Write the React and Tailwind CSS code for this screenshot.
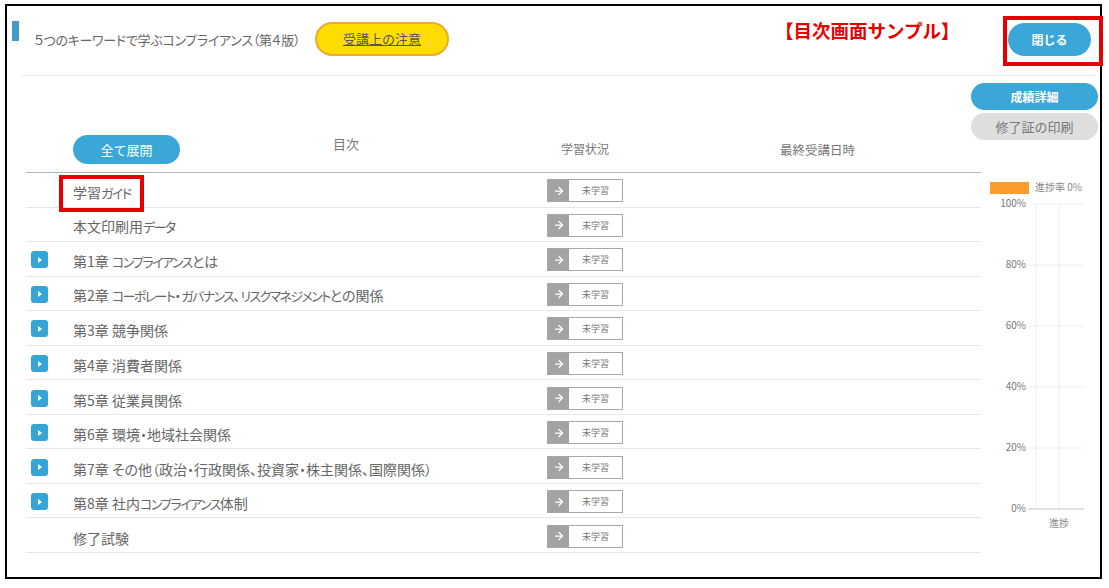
import { ArrowRight } from 'lucide-react';

const ROWS = [
    { title: '学習ガイド', expand: false },
    { title: '本文印刷用データ', expand: false },
    { title: '第1章 コンプライアンスとは', expand: true },
    { title: '第2章 コーポレート・ガバナンス、リスクマネジメントとの関係', expand: true },
    { title: '第3章 競争関係', expand: true },
    { title: '第4章 消費者関係', expand: true },
    { title: '第5章 従業員関係', expand: true },
    { title: '第6章 環境・地域社会関係', expand: true },
    { title: '第7章 その他（政治・行政関係、投資家・株主関係、国際関係）', expand: true },
    { title: '第8章 社内コンプライアンス体制', expand: true },
    { title: '修了試験', expand: false },
];

const TICKS = [
    { label: '100%', y: 204 },
    { label: '80%', y: 265 },
    { label: '60%', y: 326 },
    { label: '40%', y: 387 },
    { label: '20%', y: 448 },
    { label: '0%', y: 509 },
];

// katakana runs sit much tighter than kanji in the original font
const Title = ({ text }) => text.split(/([ァ-ヶー]+)/).map((part, i) => (
    i % 2 === 1
        ? <span key={i} className="text-[13px] tracking-[-1.6px]">{part}</span>
        : <span key={i}>{part}</span>
));

const Row = ({ title, expand }) => (
    <div className="flex items-center h-[34.55px] pt-[2px] border-b border-[#e6e6e6]">
        <div className="w-[47px] flex justify-start pl-[5px]">
            {expand && (
                <div className="w-[17px] h-[17px] rounded-[3px] bg-[#35a5d6] flex items-center justify-center">
                    <div className="w-0 h-0 border-y-[3px] border-y-transparent border-l-[4px] border-l-white" />
                </div>
            )}
        </div>
        <div className="w-[474px] pt-[3px] text-sm leading-5 [font-feature-settings:'palt'] text-[#666666] truncate">
            <Title text={title} />
        </div>
        <div className="w-[76px] h-[23px] flex border border-[#a8a8a8] bg-white">
            <div className="w-[21px] bg-[#a3a3a3] flex items-center justify-center">
                <ArrowRight className="w-3 h-3 text-white" strokeWidth={2.5} />
            </div>
            <div className="flex-1 text-center text-[9px] leading-[21px] text-[#777777]">未学習</div>
        </div>
    </div>
);

// x / y below are page coordinates, the svg starts at 971,175
const ProgressChart = () => (
    <svg width="127" height="360" viewBox="971 175 127 360" className="block">
        <rect x="990" y="182" width="39" height="12" fill="#fb9c2c" />
        <text x="1035" y="191" fontSize="10" fill="#8a8a8a">進捗率 0%</text>
        <line x1="1036" y1="204" x2="1036" y2="509" stroke="#eeeeee" />
        <line x1="1059" y1="204" x2="1059" y2="509" stroke="#eeeeee" />
        {TICKS.map((t) => (
            <g key={t.label}>
                <line x1="1028" y1={t.y} x2="1084" y2={t.y} stroke={t.label === '0%' ? '#c4c4c4' : '#eeeeee'} />
                <text x="1026" y={t.y + 3} fontSize="10" textAnchor="end" fill="#777777">{t.label}</text>
            </g>
        ))}
        <text x="1059" y="527" fontSize="10" textAnchor="middle" fill="#8a8a8a">進捗</text>
    </svg>
);

const App = () => {
    return (
        <div className="w-[1109px] h-[588px] bg-white pt-1 pl-[5px] font-['Noto_Sans_CJK_JP','Noto_Sans',sans-serif]">
            <div className="relative w-[1097px] h-[575px] border-2 border-black">
                <div className="flex h-[69px] pl-[5px]">
                    <div className="w-[7px] h-5 mt-[15px] bg-[#3f9cc4]" />
                    <div className="w-[281px] ml-[15px] mt-[24px] text-[13px] leading-5 tracking-[-0.3px] [font-feature-settings:'palt'] text-[#666666] whitespace-nowrap">５つのキーワードで学ぶコンプライアンス（第４版）</div>
                    <button className="w-[134px] h-[34px] mt-[16px] rounded-full bg-[#ffdd00] border-2 border-[#f0a92c] text-[13px] underline text-[#555555]">受講上の注意</button>
                    <div className="w-[190px] ml-[326px] mt-[14px] text-[18.5px] leading-5 font-bold text-[#e60000] whitespace-nowrap">【目次画面サンプル】</div>
                    <button className="w-[83px] h-[33px] ml-[43px] mt-[17px] rounded-full bg-[#3ba7d8] text-xs font-bold text-white">閉じる</button>
                </div>
                <div className="ml-[15px] mr-[5px] border-b border-[#ececec]" />
                <div className="flex ml-[19px]">
                    <div className="w-[955px]">
                        <div className="relative h-[97px] border-b border-[#b5b5b5]">
                            <button className="absolute left-[47px] top-[59px] w-[107px] h-[29px] rounded-full bg-[#3ba7d8] text-[13px] text-white">全て展開</button>
                            <div className="absolute left-[307px] top-[58px] text-[13px] text-[#777777]">目次</div>
                            <div className="absolute left-[535px] top-[65px] text-xs text-[#777777]">学習状況</div>
                            <div className="absolute left-[754px] top-[65px] text-[12.5px] text-[#777777]">最終受講日時</div>
                        </div>
                        {ROWS.map((r) => <Row key={r.title} {...r} />)}
                    </div>
                    <div className="ml-[-10px] w-[127px]">
                        <button className="block w-[127px] h-[27px] mt-[7px] rounded-full bg-[#3ba7d8] text-xs font-bold text-white">成績詳細</button>
                        <button className="block w-[127px] h-[27px] mt-[3px] rounded-full bg-[#dedede] text-[13px] text-[#777777]">修了証の印刷</button>
                        <div className="mt-[35px]"><ProgressChart /></div>
                    </div>
                </div>
                {/* red annotation boxes */}
                <div className="absolute left-[996px] top-[10px] w-[100px] h-[50px] border-4 border-[#e60000]" />
                <div className="absolute left-[52px] top-[169px] w-[85px] h-[37px] border-4 border-[#e60000]" />
            </div>
        </div>
    );
};

export default App;
